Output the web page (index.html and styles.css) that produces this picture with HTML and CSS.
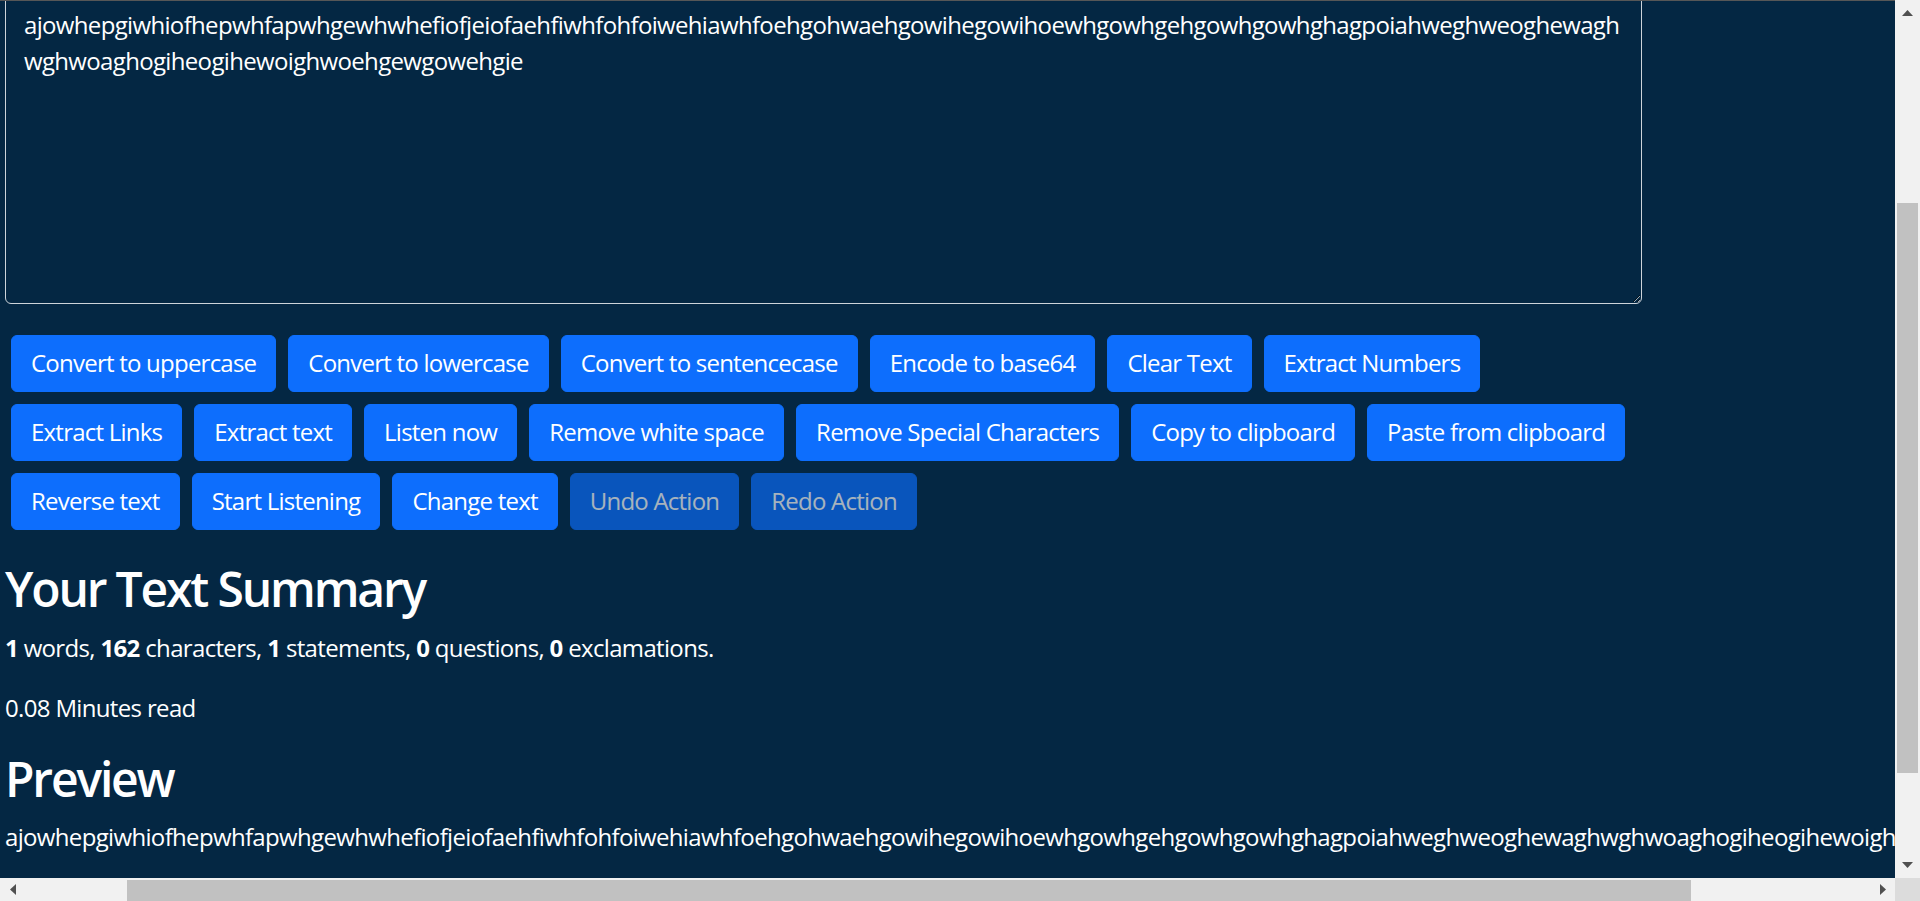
FILE: index.html
```html
<!DOCTYPE html>
<html lang="en">
<head>
<meta charset="utf-8">
<title>TextUtils</title>
<link rel="stylesheet" href="styles.css">
</head>
<body>
<div class="screen">
  <div class="viewport">
    <main class="page">
      <section class="editor">
        <div class="field">
          <textarea class="text-box" id="myBox" rows="8">ajowhepgiwhiofhepwhfapwhgewhwhefiofjeiofaehfiwhfohfoiwehiawhfoehgohwaehgowihegowihoewhgowhgehgowhgowhghagpoiahweghweoghewaghwghwoaghogiheogihewoighwoehgewgowehgie</textarea>
        </div>
        <div class="actions">
          <div class="action-row">
            <button class="btn">Convert to uppercase</button>
            <button class="btn">Convert to lowercase</button>
            <button class="btn">Convert to sentencecase</button>
            <button class="btn">Encode to base64</button>
            <button class="btn">Clear Text</button>
            <button class="btn">Extract Numbers</button>
          </div>
          <div class="action-row">
            <button class="btn">Extract Links</button>
            <button class="btn">Extract text</button>
            <button class="btn">Listen now</button>
            <button class="btn">Remove white space</button>
            <button class="btn">Remove Special Characters</button>
            <button class="btn">Copy to clipboard</button>
            <button class="btn">Paste from clipboard</button>
          </div>
          <div class="action-row">
            <button class="btn">Reverse text</button>
            <button class="btn">Start Listening</button>
            <button class="btn">Change text</button>
            <button class="btn" disabled>Undo Action</button>
            <button class="btn" disabled>Redo Action</button>
          </div>
        </div>
      </section>
      <section class="summary">
        <h2 class="heading">Your Text Summary</h2>
        <p class="line"><b>1</b> words, <b>162</b> characters, <b>1</b> statements, <b>0</b> questions, <b>0</b> exclamations.</p>
        <p class="line">0.08 Minutes read</p>
        <h2 class="heading">Preview</h2>
        <p class="line preview-text">ajowhepgiwhiofhepwhfapwhgewhwhefiofjeiofaehfiwhfohfoiwehiawhfoehgohwaehgowihegowihoewhgowhgehgowhgowhghagpoiahweghweoghewaghwghwoaghogiheogihewoighwoehgewgowehgie</p>
      </section>
    </main>
  </div>

  <div class="vscroll">
    <div class="sb-btn">
      <svg class="arrow" width="11" height="6" viewBox="0 0 11 6"><polygon points="5.5,0 11,6 0,6" fill="#505050"/></svg>
    </div>
    <div class="v-track"><div class="v-thumb"></div></div>
    <div class="sb-btn">
      <svg class="arrow" width="11" height="6" viewBox="0 0 11 6"><polygon points="0,0 11,0 5.5,6" fill="#505050"/></svg>
    </div>
  </div>

  <div class="hscroll">
    <div class="sb-btn h">
      <svg class="arrow" width="6" height="11" viewBox="0 0 6 11"><polygon points="6,0 6,11 0,5.5" fill="#505050"/></svg>
    </div>
    <div class="h-track"><div class="h-thumb"></div></div>
    <div class="sb-btn h">
      <svg class="arrow" width="6" height="11" viewBox="0 0 6 11"><polygon points="0,0 6,5.5 0,11" fill="#505050"/></svg>
    </div>
  </div>

  <div class="corner"></div>
</div>
</body>
</html>
```

FILE: styles.css
```css
html, body {
  margin: 0;
  padding: 0;
  height: 100%;
  overflow: hidden;
}

body {
  font-family: "Open Sans", "Noto Sans", sans-serif;
  background: #042743;
}

.screen {
  display: grid;
  grid-template-columns: 1fr 25px;
  grid-template-rows: 1fr 23px;
  width: 1920px;
  height: 901px;
}

.viewport {
  overflow: hidden;
  background: #042743;
  color: #ffffff;
  border-top: 1px solid #575757;
  font-size: 24px;
  line-height: 36px;
  letter-spacing: -0.0275em;
}

.page {
  margin-top: -6px;
  padding-left: 5px;
  width: 1637px;
}

.field {
  margin-bottom: 25px;
}

.text-box {
  display: block;
  box-sizing: border-box;
  width: 1637px;
  height: 309px;
  margin: 0;
  padding: 11px 18px 7px;
  border: 1px solid #ced4da;
  border-radius: 6px;
  background: #042743;
  color: #ffffff;
  font: inherit;
  letter-spacing: inherit;
  outline: none;
  resize: vertical;
}

.action-row {
  display: flex;
}

.btn {
  margin: 6px;
  padding: 9px 19px 10px;
  border: 1px solid #0d6efd;
  border-radius: 6px;
  background: #0d6efd;
  color: #ffffff;
  font: inherit;
  letter-spacing: -0.032em;
  line-height: 36px;
  white-space: nowrap;
  cursor: pointer;
}

.btn:disabled {
  opacity: 0.65;
  cursor: default;
}

.summary {
  margin-top: 24px;
}

.heading {
  margin: 0 0 12px;
  font-size: 48px;
  line-height: 1.2;
  font-weight: 600;
  letter-spacing: -0.045em;
}

.line {
  margin: 0 0 24px;
}

.line b {
  font-weight: 700;
}

.preview-text {
  white-space: nowrap;
}

/* scrollbars */
.vscroll {
  display: flex;
  flex-direction: column;
  background: #f1f1f1;
}

.sb-btn {
  height: 26px;
  display: flex;
  align-items: center;
  justify-content: center;
  flex: none;
}

.sb-btn.h {
  height: auto;
  width: 25px;
}

.arrow {
  display: block;
}

.v-track {
  flex: 1;
  padding: 0 2px;
}

.v-thumb {
  margin-top: 177px;
  height: 570px;
  background: #c1c1c1;
}

.hscroll {
  display: flex;
  background: #f1f1f1;
}

.h-track {
  flex: 1;
  padding-top: 2px;
}

.h-thumb {
  margin-left: 102px;
  width: 1564px;
  height: 21px;
  background: #c1c1c1;
}

.corner {
  background: #dcdcdc;
}
```
